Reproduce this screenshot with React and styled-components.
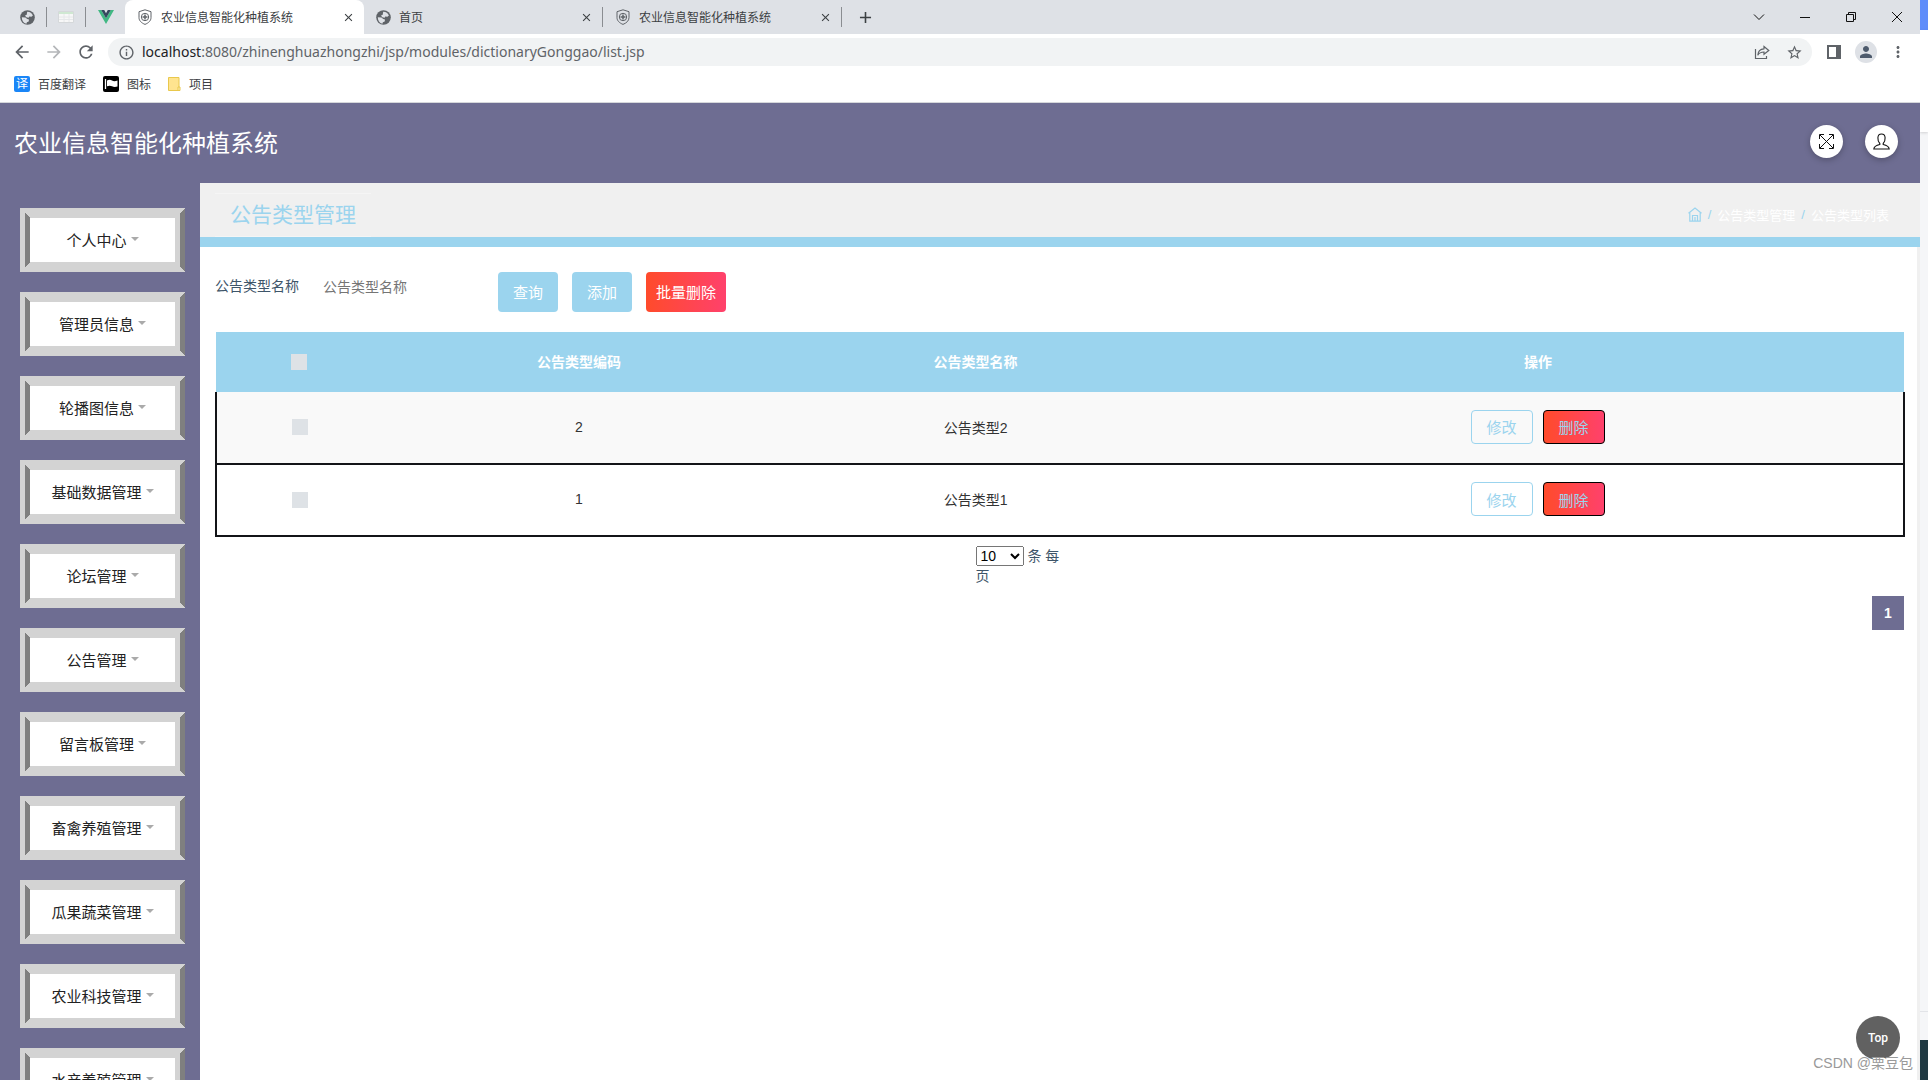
// src/App.jsx
import React, { useState } from "react";
import styled, { createGlobalStyle } from "styled-components";
import {
  MdAdd,
  MdArrowBack,
  MdArrowForward,
  MdClose,
  MdInfoOutline,
  MdMoreVert,
  MdPerson,
  MdRefresh,
  MdStarBorder,
} from "react-icons/md";

const menus = [
  "个人中心",
  "管理员信息",
  "轮播图信息",
  "基础数据管理",
  "论坛管理",
  "公告管理",
  "留言板管理",
  "畜禽养殖管理",
  "瓜果蔬菜管理",
  "农业科技管理",
  "水产养殖管理",
];

const rows = [
  { code: 2, name: "公告类型2" },
  { code: 1, name: "公告类型1" },
];

const GlobeIcon = () => (
  <svg width="15" height="15" viewBox="0 0 15 15">
    <circle cx="7.5" cy="7.5" r="7.300" fill="#5f6368" />
    <path d="M1.800 7.200 5.500 7.400l1.700 1.700 1.800.3-.3 2-1.800.8-.5 1.500C3.500 13 1.700 10.500 1.800 7.200z" fill="#dee1e6" />
    <path d="M7.200 1.700c2.700-.1 4.800 1.500 5.700 3.700l-1.500 1.300-2.100-.2-.7 1.300L6.300 7.300 5 5.600l1.700-.9z" fill="#dee1e6" />
  </svg>
);

const ShieldIcon = () => (
  <svg width="16" height="16" viewBox="0 0 16 16" fill="none" stroke="#5f6368">
    <path d="M8 .8 14 2.700v6c0 3-2.500 5.300-6 6.700-3.500-1.400-6-3.700-6-6.700v-6z" />
    <circle cx="8" cy="8" r="3.700" />
    <path d="M8 5.500v5M5.500 8h5" strokeWidth="1.500" />
  </svg>
);

const SheetIcon = () => (
  <svg width="16" height="14" viewBox="0 0 16 14">
    <path d="M.5 1.500h15v11H.5z" fill="#f7f7f7" stroke="#d5d8da" />
    <path d="M1 2h14v2H1z" fill="#cfe8d2" />
    <path d="M1 7h14M1 9.500h14M6 4v8M11 4v8" stroke="#e6e8ea" />
  </svg>
);

const VueIcon = () => (
  <svg width="16" height="14" viewBox="0 0 16 14">
    <path d="M0 0h3.200L8 8.300 12.800 0H16L8 14z" fill="#41b883" />
    <path d="M3.200 0h3L8 3.200 9.800 0h3L8 8.300z" fill="#35495e" />
  </svg>
);

const ShareIcon = () => (
  <svg width="16" height="16" viewBox="0 0 16 16" fill="none" stroke="#5f6368" strokeWidth="1.200">
    <path d="M1.500 5v9.500h11V12" />
    <path d="M10 2.500 14.800 6.500 10 10.300V8C7 8 5 9 3.800 11.200 4 7.500 6.300 5 10 4.800z" />
  </svg>
);

const PanelIcon = () => (
  <svg width="14" height="14" viewBox="0 0 14 14">
    <path d="M1 1h12v12H1z" fill="none" stroke="#5f6368" strokeWidth="2" />
    <path d="M9 0h5v14H9z" fill="#5f6368" />
  </svg>
);

const FlagIcon = () => (
  <svg width="16" height="16" viewBox="0 0 16 16">
    <rect width="16" height="16" rx="2" fill="#000" />
    <path d="M2.500 3v10" stroke="#fff" strokeWidth="1.300" />
    <path d="M4 4.500c2-1 3.500-1 5 0s3.500.8 5.500 0v6c-2 .7-4 .6-5.500-.2s-3-.8-5 0z" fill="#fff" />
  </svg>
);

const FolderIcon = () => (
  <svg width="13" height="16" viewBox="0 0 13 16">
    <path d="M.5 1.500h10.500v13H.5z" fill="#ffe48f" stroke="#e9c84c" />
    <path d="M10 11h2v3.500h-2z" fill="#fff0b8" stroke="#e9c84c" />
  </svg>
);

const ExpandIcon = () => (
  <svg width="17" height="17" viewBox="0 0 17 17" fill="none" stroke="#111">
    <path d="M2 2l13 13M15 2 2 15" />
    <path d="M1.500 6V1.500H6M11 1.500h4.500V6M15.500 11v4.500H11M6 15.500H1.500V11" />
  </svg>
);

const UserIcon = () => (
  <svg width="17" height="17" viewBox="0 0 17 17" fill="none" stroke="#111" strokeWidth="1.100">
    <path d="M6.800 10.500C5.300 9 4.800 7 4.900 4.700 5 2.300 6.300 1 8.500 1s3.500 1.300 3.600 3.700c.1 2.300-.4 4.300-1.900 5.800v1c3 .7 5.700 1.600 6 4.500H.8c.3-2.900 3-3.800 6-4.500z" />
  </svg>
);

const HomeIcon = () => (
  <svg width="14" height="15" viewBox="0 0 14 15" fill="none" stroke="#9bd4ee" strokeWidth="1.200">
    <path d="M.5 6.300 7 1l6.500 5.300M1.800 5.500v8.700h10.400V5.500" />
    <path d="M4.500 14V8.500h5V14M7 10v4" />
  </svg>
);

const App = () => {
  const [checked, setChecked] = useState([]);
  const [pageSize, setPageSize] = useState("10");

  const toggleRow = (code) =>
    setChecked((prev) =>
      prev.includes(code) ? prev.filter((c) => c !== code) : [...prev, code]
    );

  const toggleAll = () =>
    setChecked(checked.length === rows.length ? [] : rows.map((r) => r.code));

  return (
    <Desktop>
      <GlobalStyle />
      <Browser>
        {/* Tab strip */}
        <TabStrip>
          <PinnedTab aria-label="网页"><GlobeIcon /></PinnedTab>
          <PinnedTab aria-label="表格"><SheetIcon /></PinnedTab>
          <PinnedTab aria-label="Vue" $last><VueIcon /></PinnedTab>
          <Tab $active>
            <ShieldIcon />
            <TabTitle>农业信息智能化种植系统</TabTitle>
            <CloseTab aria-label="关闭标签页"><MdClose size={13} /></CloseTab>
          </Tab>
          <Tab>
            <GlobeIcon />
            <TabTitle>首页</TabTitle>
            <CloseTab aria-label="关闭标签页"><MdClose size={13} /></CloseTab>
          </Tab>
          <Tab>
            <ShieldIcon />
            <TabTitle>农业信息智能化种植系统</TabTitle>
            <CloseTab aria-label="关闭标签页"><MdClose size={13} /></CloseTab>
          </Tab>
          <NewTab aria-label="新标签页"><MdAdd size={19} /></NewTab>
          <WindowControls>
            <WindowButton aria-label="搜索标签页">
              <svg width="12" height="12" viewBox="0 0 12 12"><path d="M1 3.500 6 8.500l5-5" /></svg>
            </WindowButton>
            <WindowButton aria-label="最小化">
              <svg width="12" height="12" viewBox="0 0 12 12"><path d="M1 6.500h10" /></svg>
            </WindowButton>
            <WindowButton aria-label="还原">
              <svg width="12" height="12" viewBox="0 0 12 12"><path d="M1.500 3.500h7v7h-7zM3.500 3.500v-2h7v7h-2" /></svg>
            </WindowButton>
            <WindowButton aria-label="关闭">
              <svg width="12" height="12" viewBox="0 0 12 12"><path d="M1 1l10 10M11 1 1 11" /></svg>
            </WindowButton>
          </WindowControls>
        </TabStrip>

        {/* Address bar */}
        <Toolbar>
          <ToolButton aria-label="后退"><MdArrowBack size={20} /></ToolButton>
          <ToolButton aria-label="前进" disabled><MdArrowForward size={20} /></ToolButton>
          <ToolButton aria-label="重新加载"><MdRefresh size={20} /></ToolButton>
          <Omnibox>
            <MdInfoOutline size={17} />
            <Url>
              <b>localhost</b>:8080/zhinenghuazhongzhi/jsp/modules/dictionaryGonggao/list.jsp
            </Url>
            <ToolButton aria-label="分享"><ShareIcon /></ToolButton>
            <ToolButton aria-label="收藏"><MdStarBorder size={17} /></ToolButton>
          </Omnibox>
          <ToolButton aria-label="侧边栏"><PanelIcon /></ToolButton>
          <ToolButton aria-label="用户">
            <Avatar><MdPerson size={18} /></Avatar>
          </ToolButton>
          <ToolButton aria-label="菜单"><MdMoreVert size={18} /></ToolButton>
        </Toolbar>

        <Bookmarks>
          <Bookmark href="#"><Translate>译</Translate>百度翻译</Bookmark>
          <Bookmark href="#"><FlagIcon />图标</Bookmark>
          <Bookmark href="#"><FolderIcon />项目</Bookmark>
        </Bookmarks>

        {/* Page */}
        <Header>
          <Brand>农业信息智能化种植系统</Brand>
          <RoundButton aria-label="全屏"><ExpandIcon /></RoundButton>
          <RoundButton aria-label="个人信息"><UserIcon /></RoundButton>
        </Header>

        <Layout>
          <Sidebar>
            {menus.map((name) => (
              <MenuButton key={name}>
                {name}
                <Caret />
              </MenuButton>
            ))}
          </Sidebar>

          <Main>
            <TitleBar>
              <PageTitle>公告类型管理</PageTitle>
              <Breadcrumb>
                <a href="#" aria-label="首页"><HomeIcon /></a>
                <i>/</i>
                <span>公告类型管理</span>
                <i>/</i>
                <span>公告类型列表</span>
              </Breadcrumb>
            </TitleBar>

            <Content>
              <SearchForm onSubmit={(e) => e.preventDefault()}>
                <label htmlFor="indexName">公告类型名称</label>
                <SearchInput id="indexName" placeholder="公告类型名称" />
                <ActionButton type="submit">查询</ActionButton>
                <ActionButton type="button">添加</ActionButton>
                <ActionButton type="button" $danger>批量删除</ActionButton>
              </SearchForm>

              <Table>
                <colgroup>
                  <Col $width="10%" />
                  <Col $width="23%" />
                  <Col $width="24%" />
                  <Col $width="43%" />
                </colgroup>
                <thead>
                  <tr>
                    <th>
                      <Checkbox
                        aria-label="全选"
                        checked={checked.length === rows.length}
                        onChange={toggleAll}
                      />
                    </th>
                    <th>公告类型编码</th>
                    <th>公告类型名称</th>
                    <th>操作</th>
                  </tr>
                </thead>
                <tbody>
                  {rows.map((row) => (
                    <tr key={row.code}>
                      <td>
                        <Checkbox
                          aria-label={row.name}
                          checked={checked.includes(row.code)}
                          onChange={() => toggleRow(row.code)}
                        />
                      </td>
                      <td>{row.code}</td>
                      <td>{row.name}</td>
                      <td>
                        <RowActions>
                          <RowButton>修改</RowButton>
                          <RowButton $danger>删除</RowButton>
                        </RowActions>
                      </td>
                    </tr>
                  ))}
                </tbody>
              </Table>

              <PageSize>
                <select
                  aria-label="条每页"
                  value={pageSize}
                  onChange={(e) => setPageSize(e.target.value)}
                >
                  <option value="10">10</option>
                  <option value="25">25</option>
                  <option value="50">50</option>
                </select>{" "}
                条 每页
              </PageSize>
              <Pagination>
                <PageButton>1</PageButton>
              </Pagination>
            </Content>
          </Main>
        </Layout>

        <TopButton>Top</TopButton>
        <Watermark>CSDN @栗豆包</Watermark>
      </Browser>

      {/* Window lying behind the browser */}
      <Behind>
        <BehindTitle />
        <BehindBar />
        <BehindBody />
        <BehindStatus />
        <BehindFooter />
      </Behind>
    </Desktop>
  );
};

const GlobalStyle = createGlobalStyle`
  * {
    box-sizing: border-box;
  }

  body {
    margin: 0;
    font-family: "Liberation Sans", "Noto Sans CJK SC", sans-serif;
    font-size: 14px;
    color: #3e5569;
  }

  button,
  input,
  select {
    font-family: inherit;
  }

  svg {
    flex-shrink: 0;
  }
`;

const Desktop = styled.div`
  display: flex;
  height: 100vh;
  overflow: hidden;
`;

const Browser = styled.div`
  position: relative;
  flex: 1;
  min-width: 0;
  display: flex;
  flex-direction: column;
  background: #fff;
`;

const PlainButton = styled.button`
  display: flex;
  align-items: center;
  justify-content: center;
  padding: 0;
  border: none;
  background: transparent;
  color: #3c4043;
`;

const TabStrip = styled.div`
  display: flex;
  align-items: center;
  flex-shrink: 0;
  height: 34px;
  padding-left: 8px;
  background: #dee1e6;
  color: #5f6368;
`;

const PinnedTab = styled(PlainButton)`
  width: 39px;
  height: 20px;
  border-right: ${(p) => (p.$last ? "none" : "1px solid #8a8d91")};
  color: #5f6368;
`;

const Tab = styled.div`
  display: flex;
  align-items: center;
  gap: 8px;
  width: 239px;
  height: ${(p) => (p.$active ? "34px" : "20px")};
  padding: 0 9px 0 12px;
  border-right: ${(p) => (p.$active ? "none" : "1px solid #8a8d91")};
  border-radius: ${(p) => (p.$active ? "8px 8px 0 0" : "0")};
  background: ${(p) => (p.$active ? "#fff" : "transparent")};
`;

const TabTitle = styled.span`
  flex: 1;
  padding-bottom: 1px;
  font-size: 12px;
  color: #3c4043;
  white-space: nowrap;
`;

const CloseTab = styled(PlainButton)`
  path {
    stroke: #3c4043;
  }
`;

const NewTab = styled(PlainButton)`
  width: 46px;
`;

const WindowControls = styled.div`
  display: flex;
  margin-left: auto;
  height: 28px;
`;

const WindowButton = styled(PlainButton)`
  width: 46px;

  path {
    fill: none;
    stroke: #111;
  }
`;

const Toolbar = styled.div`
  display: flex;
  align-items: center;
  flex-shrink: 0;
  height: 36px;
  padding: 0 6px;
`;

const ToolButton = styled(PlainButton)`
  width: 32px;
  height: 28px;
  color: ${(p) => (p.disabled ? "#b4b6b9" : "#5f6368")};
`;

const Omnibox = styled.div`
  display: flex;
  align-items: center;
  flex: 1;
  height: 28px;
  margin: 0 6px;
  padding: 0 2px 0 10px;
  border-radius: 14px;
  background: #f1f3f4;
  color: #5f6368;
`;

const Url = styled.span`
  flex: 1;
  margin-left: 7px;
  padding-bottom: 2px;
  font-family: "Noto Sans", sans-serif;
  font-size: 14px;
  white-space: nowrap;

  b {
    font-weight: 400;
    color: #202124;
  }
`;

const Avatar = styled.span`
  display: flex;
  align-items: center;
  justify-content: center;
  width: 22px;
  height: 22px;
  border-radius: 50%;
  background: #dee1e6;
  color: #4d5a6c;
`;

const Bookmarks = styled.nav`
  display: flex;
  align-items: center;
  flex-shrink: 0;
  gap: 17px;
  height: 33px;
  padding: 0 14px 5px;
  border-bottom: 1px solid #d5d7db;
`;

const Bookmark = styled.a`
  display: flex;
  align-items: center;
  gap: 8px;
  font-size: 12px;
  color: #3c4043;
  text-decoration: none;
`;

const Translate = styled.span`
  width: 16px;
  height: 16px;
  border-radius: 2px;
  background: #1a86f7;
  color: #fff;
  font-size: 12px;
  line-height: 16px;
  text-align: center;
`;

const Header = styled.header`
  display: flex;
  align-items: center;
  flex-shrink: 0;
  gap: 22px;
  height: 80px;
  padding: 0 22px 3px 14px;
  background: #6e6d92;
`;

const Brand = styled.h1`
  flex: 1;
  margin: 0;
  font-size: 24px;
  font-weight: 400;
  color: #fff;
`;

const RoundButton = styled(PlainButton)`
  width: 33px;
  height: 33px;
  border-radius: 50%;
  background: #fff;
  box-shadow: 0 2px 6px rgba(0, 0, 0, 0.25);
`;

const Layout = styled.div`
  display: flex;
  flex: 1;
  min-height: 0;
`;

const Sidebar = styled.nav`
  display: flex;
  flex-direction: column;
  flex-shrink: 0;
  gap: 20px;
  width: 200px;
  padding: 25px 15px 0 20px;
  background: #6e6d92;
  overflow: hidden;
`;

const MenuButton = styled.button`
  display: flex;
  align-items: center;
  justify-content: center;
  flex-shrink: 0;
  gap: 4px;
  height: 64px;
  padding: 0 0 2px;
  border-width: 10px;
  border-style: solid ridge;
  border-color: #d3d3d3;
  background: #fff;
  font-size: 15px;
  color: #222;
`;

const Caret = styled.span`
  border: 4px solid transparent;
  border-top-color: #aaa;
  border-bottom: none;
`;

const Main = styled.main`
  flex: 1;
  min-width: 0;
  display: flex;
  flex-direction: column;
`;

const TitleBar = styled.div`
  display: flex;
  align-items: center;
  justify-content: space-between;
  flex-shrink: 0;
  height: 64px;
  padding: 0 31px 0 15px;
  border-bottom: 10px solid #9bd4ee;
  background: #f0f0f0;
`;

const PageTitle = styled.h2`
  margin: 10px 0 0;
  padding: 0 15px;
  border: 1px solid #f5f5f5;
  border-width: 1px 0;
  font-size: 21px;
  font-weight: 400;
  line-height: 42px;
  color: #9bd4ee;
`;

const Breadcrumb = styled.div`
  display: flex;
  align-items: center;
  gap: 6px;
  margin-top: 8px;
  font-size: 13px;
  color: #fff;

  a {
    display: flex;
  }

  i {
    font-style: normal;
    color: #9bd4ee;
  }
`;

const Content = styled.div`
  flex: 1;
  padding: 25px 12px 0 15px;
  border-right: 3px solid #f0f0f0;
`;

const SearchForm = styled.form`
  display: flex;
  align-items: flex-start;
  gap: 14px;
  line-height: 28px;
`;

const SearchInput = styled.input`
  width: 171px;
  height: 30px;
  padding: 0 10px;
  border: none;
  outline: none;
  font-size: 14px;

  &::placeholder {
    color: #757575;
  }
`;

const ActionButton = styled.button`
  min-width: 60px;
  height: 40px;
  padding: 0 10px 2px;
  border: none;
  border-radius: 4px;
  background: ${(p) =>
    p.$danger ? "linear-gradient(to right, #ff4b2b, #ff416c)" : "#9bd4ee"};
  font-size: 15px;
  color: #fff;
`;

const Table = styled.table`
  width: 100%;
  margin-top: 20px;
  border-collapse: collapse;
  table-layout: fixed;
  text-align: center;
  color: #333;

  th,
  td {
    padding: 0 0 2px;
  }

  th:first-child,
  td:first-child {
    padding-right: 2px;
  }

  th:last-child,
  td:last-child {
    padding-right: 6px;
  }

  th {
    height: 60px;
    background: #9bd4ee;
    color: #fff;
  }

  td {
    height: 72px;
  }

  tbody tr {
    border: 2px solid #131418;
    border-top: none;
  }

  tbody tr:nth-child(odd) {
    background: #f9f9f9;
  }
`;

const Col = styled.col`
  width: ${(p) => p.$width};
`;

const Checkbox = styled.input.attrs({ type: "checkbox" })`
  appearance: none;
  width: 16px;
  height: 16px;
  margin: 0;
  background: #dee2e6;
  vertical-align: middle;

  &:checked {
    background: #6e6d92;
  }
`;

const RowActions = styled.div`
  display: flex;
  justify-content: center;
  gap: 10px;
`;

const RowButton = styled.button`
  width: 62px;
  height: 34px;
  padding: 0;
  border: 1px solid ${(p) => (p.$danger ? "#000" : "#9bd4ee")};
  border-radius: 4px;
  background: ${(p) =>
    p.$danger ? "linear-gradient(to right, #ff4b2b, #ff416c)" : "transparent"};
  font-size: 15px;
  color: #9bd4ee;
`;

const PageSize = styled.div`
  width: 88px;
  margin: 9px 0 0 45%;
  line-height: 20px;

  select {
    width: 48px;
    height: 20px;
    padding: 0;
    font-size: 14px;
    vertical-align: top;
  }
`;

const Pagination = styled.div`
  display: flex;
  justify-content: flex-end;
  margin-top: 10px;
  padding-right: 1px;
`;

const PageButton = styled.button`
  width: 32px;
  height: 34px;
  border: none;
  background: #6e6d92;
  font-size: 14px;
  font-weight: 700;
  color: #fff;
`;

const TopButton = styled.button`
  position: absolute;
  right: 20px;
  bottom: 20px;
  width: 44px;
  height: 44px;
  padding: 0;
  border: none;
  border-radius: 50%;
  background: #616161;
  font-family: Roboto, sans-serif;
  font-size: 12px;
  font-weight: 500;
  color: #fff;
`;

const Watermark = styled.span`
  position: absolute;
  right: 7px;
  bottom: 8px;
  font-size: 14px;
  color: #999;
  text-shadow: 1px 1px 0 #fff;
`;

const Behind = styled.div`
  display: flex;
  flex-direction: column;
  width: 8px;
  background: #f5f6f8;
`;

const BehindTitle = styled.div`
  height: 30px;
  background: #5f8dfa;
`;

const BehindBar = styled.div`
  height: 102px;
  background: #fff;
  box-shadow: 0 1px 3px rgba(0, 0, 0, 0.15);
`;

const BehindBody = styled.div`
  flex: 1;
`;

const BehindStatus = styled.div`
  height: 29px;
  border-top: 1px solid #e2e4e8;
`;

const BehindFooter = styled.div`
  height: 40px;
  background: #203a43;
`;

export default App;
